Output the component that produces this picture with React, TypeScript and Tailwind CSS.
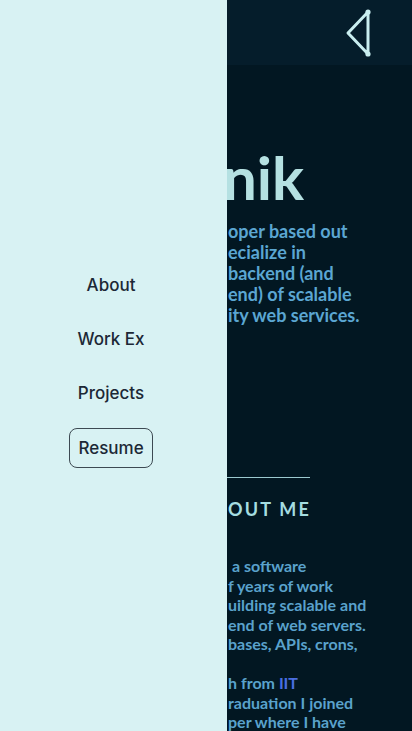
import React from "react";

function Line({
  hidden,
  children,
  w = "w-[204px]",
}: {
  hidden: string;
  children: React.ReactNode;
  w?: string;
}) {
  return (
    <div className="whitespace-nowrap">
      <span className={`inline-block ${w} overflow-hidden align-bottom`}>{hidden}</span>
      {children}
    </div>
  );
}

const heroLines: [string, string][] = [
  ["A software devel", "oper based out"],
  ["of India. I sp", "ecialize in"],
  ["building the ", "backend (and"],
  ["sometimes front", "end) of scalable"],
  ["and high qual", "ity web services."],
];

const aboutLines: [string, React.ReactNode][] = [
  ["Hello! I am", " a software"],
  ["engineer with a couple o", "f years of work"],
  ["experience in b", "uilding scalable and"],
  ["robust back", "end of web servers."],
  ["I have worked on data", "bases, APIs, crons,"],
  ["queues etc.", ""],
  ["I graduated with a B.Tec", <>h from <span className="text-[#4a6ee0]">IIT</span></>],
  ["Roorkee. After g", "raduation I joined"],
  ["as a backend develo", "per where I have"],
];

export default function App() {
  return (
    <div
      className="relative w-[412px] h-[731px] overflow-hidden bg-[#021722]"
      style={{ fontFamily: "Lato, 'Noto Sans', sans-serif" }}
    >
      <header className="h-[65px] bg-[#051d2b] flex items-center justify-end pr-[32px]">
        <svg width="40" height="54" viewBox="340 4 40 54" fill="none">
          <path
            d="M368 10 L348 31 L368 52 Z"
            stroke="#c9eef0"
            strokeWidth="3"
            strokeLinejoin="round"
          />
          <circle cx="368" cy="10" r="2.6" fill="#c9eef0" />
          <circle cx="368" cy="52" r="2.6" fill="#c9eef0" />
        </svg>
      </header>

      <main className="pl-6">
        <section className="pt-[77px]">
          <h1 className="text-[60px] leading-[70px] font-bold text-[#b5e1e2]">
            <Line hidden="Kartik Bho" w="w-[199px]">
              nik
            </Line>
          </h1>
          <div className="mt-[9px] text-[18px] leading-[21px] font-bold text-[#5ba6d2]">
            {heroLines.map(([h, v], i) => (
              <Line key={i} hidden={h}>
                {v}
              </Line>
            ))}
          </div>
        </section>

        <section className="mt-[151px]">
          <div className="w-[286px] h-px bg-[#9cc9cf]" />
          <h2 className="mt-[18px] text-[18px] font-bold tracking-[2.2px] text-[#a5dde0]">
            <Line hidden="AB">OUT ME</Line>
          </h2>
          <div className="mt-[33px] text-[16px] leading-[19.5px] font-bold text-[#5aa2cc]">
            {aboutLines.map(([h, v], i) => (
              <Line key={i} hidden={h}>
                {v}
              </Line>
            ))}
          </div>
        </section>
      </main>

      <aside
        className="absolute left-0 top-0 h-full w-[227px] bg-[#d8f2f3] flex flex-col items-center justify-center text-[#1c2836]"
        style={{ fontFamily: "Inter, 'Noto Sans', sans-serif" }}
      >
        <nav className="flex flex-col items-center gap-[30px] pt-[10px] -ml-[5px]">
          <a className="text-[17px] font-medium leading-[24px]">About</a>
          <a className="text-[17px] font-medium leading-[24px]">Work Ex</a>
          <a className="text-[17px] font-medium leading-[24px]">Projects</a>
          <a className="text-[17px] font-medium leading-[24px] border border-[#3d4a52] rounded-[8px] px-[8px] py-[7px] -mt-[7px]">
            Resume
          </a>
        </nav>
      </aside>
    </div>
  );
}
